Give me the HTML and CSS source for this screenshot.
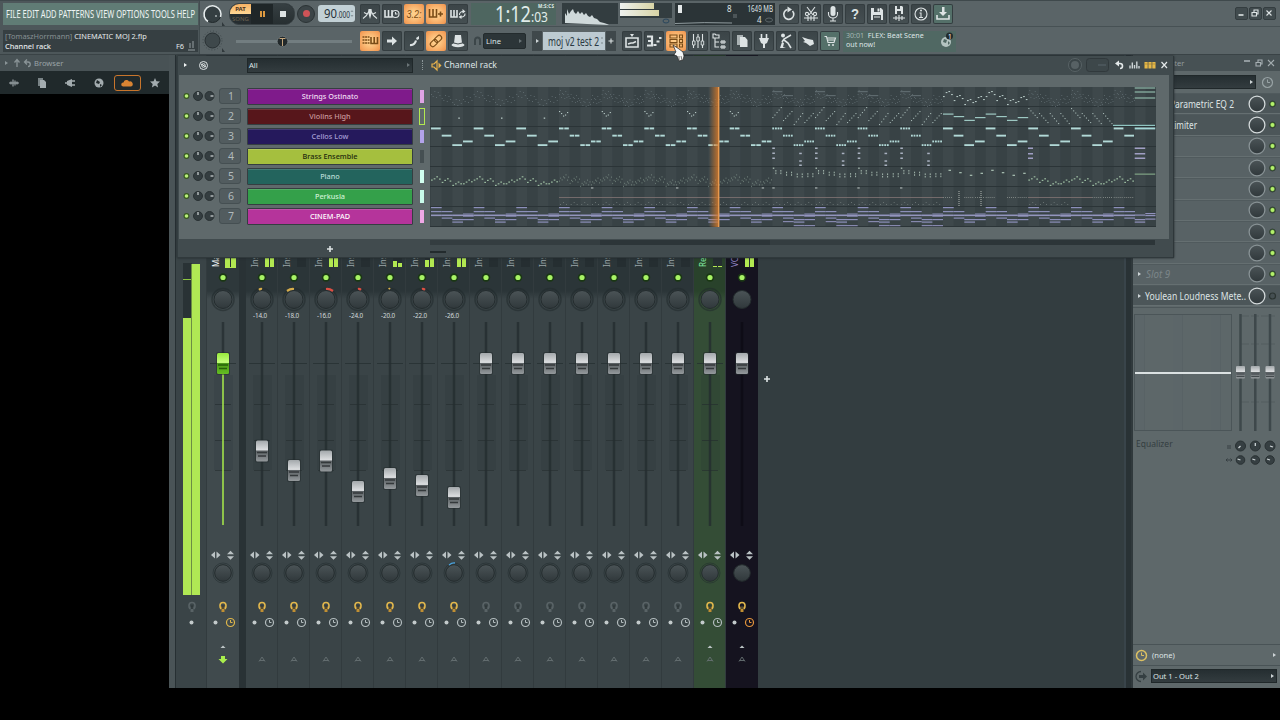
FILE: index.html
```html
<!DOCTYPE html>
<html lang="en">
<head>
<meta charset="UTF-8">
<meta name="viewport" content="width=device-width, initial-scale=1.0">
<title>CINEMATIC MOJ 2.flp</title>
<link rel="stylesheet" href="styles.css">
</head>
<body>

<header class="toolbar">
  <div class="tb-left">
    <div class="menu"><svg width="194" height="22"><text x="3" y="15" textLength="189" lengthAdjust="spacingAndGlyphs">FILE EDIT ADD PATTERNS VIEW OPTIONS TOOLS HELP</text></svg></div>
    <div class="hint">
      <div><span>[TomaszHorrmann]</span> CINEMATIC MOJ 2.flp</div>
      <div class="hint-row"><b>Channel rack</b><i>F6 <svg width="9" height="10" viewBox="0 0 9 10"><path d="M1 8h7v2H1zM2 2h2v5H2zM5 0h2v7H5z" fill="#666f72"/></svg></i></div>
    </div>
  </div>

  <div class="tb-main">
    <div class="tb-row">
      <svg class="vol" width="26" height="26" viewBox="0 0 26 26"><circle cx="12.500" cy="13" r="8.500" fill="#343e41" stroke="#20282a"/><path d="M8 20.500A8.500 8.500 0 1 1 20.500 16" fill="none" stroke="#e6eced" stroke-width="1.600"/><circle cx="16" cy="15" r="1" fill="#aab3b5"/><path d="M22 25v-4l3 4z" fill="#30393c"/></svg>
      <div class="transport">
        <div class="patsong"><span class="pat">PAT</span><span class="song">SONG</span></div>
        <div class="pause"><i></i><i></i></div>
        <div class="stop"><i></i></div>
      </div>
      <div class="rec"><i></i></div>
      <div class="tempo"><svg width="37" height="17"><text x="6" y="13" font-size="13" textLength="13" lengthAdjust="spacingAndGlyphs">90</text><text x="19" y="13" font-size="8.500" textLength="13" lengthAdjust="spacingAndGlyphs">.000</text><path d="M32.500 7l1.500-2 1.500 2zM32.500 10l1.500 2 1.500-2z" fill="#8a989d"/></svg></div>
      <div class="btns g1">
        <button><svg viewBox="0 0 20 20"><path d="M3 14.500Q7 12 8.500 8M17 14.500Q13 12 11.500 8M4 8.500l3 1.500M16 8.500l-3 1.500" class="s"/><path d="M8.500 5h3l.500 3-2 7-2-7z" class="f"/></svg></button>
        <button><svg viewBox="0 0 20 20"><path d="M3 6v7h7V6M6.500 6v7" class="s b"/><circle cx="13.500" cy="10" r="3.500" class="s"/><path d="M13.500 8v2h2" class="s"/></svg></button>
        <button class="on"><svg viewBox="0 0 20 20"><text x="2.500" y="14" font-size="11" font-style="italic" textLength="15" lengthAdjust="spacingAndGlyphs" class="t">3.2:</text></svg></button>
        <button class="on"><svg viewBox="0 0 20 20"><path d="M3.500 5v8h7V5M7 5v8M12 10h5M14.500 7.500v5" class="s b"/></svg></button>
        <button><svg viewBox="0 0 20 20"><path d="M3 6v7h6V6M6 6v7" class="s b"/><path d="M11.500 11a3 3 0 0 1 4.500-3M17 9.500a3 3 0 0 1-4.500 3" class="s"/><path d="M14.500 5l3 2.500-3 2zM13.500 11v4l-3-2z" class="f"/></svg></button>
      </div>
      <div class="clock"><svg width="84" height="22"><g fill="#e0ecea"><text x="24" y="18.500" font-size="21" textLength="36" lengthAdjust="spacingAndGlyphs">1:12</text><text x="60" y="18.500" font-size="15" textLength="17" lengthAdjust="spacingAndGlyphs">:03</text><text x="67" y="5" font-size="4.500" font-weight="bold" textLength="16">M:S:CS</text></g></svg></div>
      <div class="scope"><svg width="56" height="21"><path d="M3 20V10l2 3V6l2 5 2-3 2-2 1 3 2 2 2-3 2 3 2-2 2 3 2-2 2 3 2 1 2-2 2 3 3 1 3 3 4 1 3 1 2 1z" fill="#cfd9da"/></svg></div>
      <div class="peaks"><i></i><i></i><svg width="8" height="6"><ellipse cx="4" cy="3" rx="3" ry="2" fill="none" stroke="#29465c"/></svg></div>
      <div class="cpu"><svg width="100" height="23"><path d="M3 2h4v8H3z" fill="#e5e9ea"/><path d="M58 11h4v4h-4z" fill="#4c5558"/><path d="M0 20.500q30-1.500 57-.500" stroke="#909b9e" fill="none"/><g fill="#dfe5e6" font-size="8"><text x="52" y="8.500" textLength="4">8</text><text x="72.500" y="8.500" textLength="25.500" lengthAdjust="spacingAndGlyphs">1649 MB</text><text x="82" y="19.500" textLength="4.500">4</text></g><ellipse cx="94" cy="17" rx="3.500" ry="2" fill="none" stroke="#5b6568"/></svg></div>
      <div class="btns g2">
        <button><svg viewBox="0 0 20 20"><path d="M13.500 7a5 5 0 1 1-5-1.500" class="s b"/><path d="M8.500 2.500l4.500 3-4.500 3z" class="f"/></svg></button>
        <button><svg viewBox="0 0 20 20"><path d="M6 3l6 8M14 3l-6 8M3 14h14M7 12v5M10 11.500v5M13 12v5" class="s"/><circle cx="6" cy="10" r="1.600" class="s"/><circle cx="14" cy="10" r="1.600" class="s"/></svg></button>
        <button><svg viewBox="0 0 20 20"><rect x="7.500" y="2" width="5" height="10" rx="2.500" class="f"/><path d="M5.500 8v2a4.500 4 0 0 0 9 0V8M10 14v3M7 17h6" class="s"/></svg></button>
        <button><svg viewBox="0 0 20 20"><text x="6" y="15" font-size="14" font-weight="bold" textLength="8" lengthAdjust="spacingAndGlyphs" class="t">?</text></svg></button>
        <button><svg viewBox="0 0 20 20"><path d="M4 4h10l2 2v10H4z" class="f"/><path d="M7 4h6v4H7zM6 11h8v5H6z" fill="#414a4d"/><path d="M10.500 4.500h2v3h-2zM7 12.500h6v1H7z" class="f"/></svg></button>
        <button><svg viewBox="0 0 20 20"><path d="M6 2h7l1 1v7H6z" class="f"/><path d="M8 2h3v3H8zM8 7h4v3H8z" fill="#414a4d"/><path d="M4 14h12M7 12v4M10 11v6M13 12v4" class="s"/></svg></button>
        <button><svg viewBox="0 0 20 20"><circle cx="10" cy="10" r="6" class="s"/><path d="M8.500 9H10v4.500M8 13.500h4" class="s"/><circle cx="10" cy="6.500" r="1" class="f"/></svg></button>
        <button class="green"><svg viewBox="0 0 20 20"><path d="M9 3h2.500v5H14l-4 4-4-4h3z" class="f"/><path d="M4 11v4h12v-4" class="s b"/></svg></button>
      </div>
      <div class="winbtns big">
        <span><svg viewBox="0 0 10 10"><path d="M2.500 7h5" class="s b"/></svg></span>
        <span><svg viewBox="0 0 10 10"><path d="M2 4.500h4.500v3.500H2zM4 4V2h4v4H7" class="s"/></svg></span>
        <span><svg viewBox="0 0 10 10"><path d="M2.500 2.500l5 5M7.500 2.500l-5 5" class="s"/></svg></span>
      </div>
    </div>

    <div class="tb-row">
      <svg class="vol" width="26" height="26" viewBox="0 0 26 26"><circle cx="12.500" cy="12.500" r="9.500" fill="none" stroke="#3f494c" stroke-dasharray="1 2"/><circle cx="12.500" cy="12.500" r="7.500" fill="#3e484b" stroke="#283033"/><path d="M22 24v-4l3 4z" fill="#30393c"/></svg>
      <div class="pitch"><svg width="125" height="24"><path d="M7 12.500h116" stroke="#727d80" stroke-width="3"/><circle cx="53.500" cy="12.500" r="5.300" fill="#22292b" stroke="#7a8486" stroke-width=".700"/><path d="M50.500 9.500h6M53.500 9v8" stroke="#c3a57c"/></svg></div>
      <div class="btns g3">
        <button class="on"><svg viewBox="0 0 20 20"><path d="M2.500 6h7M2.500 9h7M2.500 12h7" class="s b" stroke-dasharray="2 .6"/><path d="M11 6v6.500h6.500V6M14.200 6v6.500" class="s b"/></svg></button>
        <button><svg viewBox="0 0 20 20"><path d="M5 10h6" class="s b3"/><path d="M10 5.500l5 4.500-5 4.500z" class="f"/></svg></button>
        <button><svg viewBox="0 0 20 20"><path d="M6 14q4.500.500 6-4.500" class="s b2"/><path d="M12 7l3-2v3l-2 1z" class="f"/></svg></button>
        <button class="on"><svg viewBox="0 0 20 20"><g transform="rotate(-45 10 10)"><rect x="3" y="7.500" width="8" height="5" rx="2.500" class="s"/><rect x="9" y="7.500" width="8" height="5" rx="2.500" class="s"/></g></svg></button>
        <button><svg viewBox="0 0 20 20"><path d="M7 4h6l1 8H6z" class="f"/><ellipse cx="10" cy="14" rx="6.500" ry="2.200" class="f"/><path d="M6 12q4 2 8 0" stroke="#414a4d" fill="none"/></svg></button>
      </div>
      <svg class="magnet" width="9" height="10" viewBox="0 0 9 10"><path d="M2 9V4a2.500 2.500 0 0 1 5 0v5" fill="none" stroke="#3c4649" stroke-width="2"/></svg>
      <div class="snap"><span>Line</span><em></em></div>
      <div class="pattern"><span class="pbtn"><em></em></span><div><svg width="62" height="18"><text x="5" y="13.500" font-size="12" textLength="51" lengthAdjust="spacingAndGlyphs">moj v2 test 2</text><path d="M59 5v2M59 10v2" stroke="#7c898d"/></svg></div><span class="pbtn"><svg width="8" height="8" viewBox="0 0 8 8"><path d="M4 1.500v5M1.500 4h5" class="s"/></svg></span></div>
      <div class="btns g4">
        <button><svg viewBox="0 0 20 20"><path d="M4 7h12v9H4zM6 13l3-1h2l3-1.500" class="s b"/><path d="M8 3h4l-2 3z" class="f"/></svg></button>
        <button><svg viewBox="0 0 20 20"><path d="M3 5.500h5M4 10h4M3 14.500h5M8 4.500v11M9.500 14h3M12.500 10.500h3M15 7h2.500" class="s b2"/></svg></button>
        <button class="on"><svg viewBox="0 0 20 20"><path d="M4 4h7v3H4zM4 8.500h7v3H4zM4 13h7v3H4zM13.500 4h3v3h-3zM13.500 8.500h3v3h-3zM13.500 13h3v3h-3z" class="s"/></svg></button>
        <button><svg viewBox="0 0 20 20"><path d="M5.500 3v14M10 3v14M14.500 3v14" class="s"/><path d="M4.500 10h2.500v4H4.500zM8.800 6h2.500v4H8.800zM13.200 10h2.500v4h-2.500z" fill="#414a4d" stroke="#dde3e4" stroke-width=".900"/></svg></button>
        <button><svg viewBox="0 0 20 20"><path d="M3 3h2l1 1h3v3H3zM5 7v9h4M5 11h4M10 11h6M10 16h6M12 9v4M14 9v4M12 14v4M14 14v4" class="s"/></svg></button>
        <button><svg viewBox="0 0 20 20"><path d="M5 4h6v10H5z" fill="#aab2b4"/><path d="M8 6h5l2.500 3v7H8z" class="f"/></svg></button>
        <button><svg viewBox="0 0 20 20"><path d="M7.500 3v4M12.500 3v4" class="s b"/><path d="M5 7h10l-2 5-2 1v4H9v-4l-2-1z" class="f"/></svg></button>
        <button><svg viewBox="0 0 20 20"><circle cx="7" cy="4.500" r="2" class="f"/><path d="M15 4L8 8l-2 3M8 9l4 3 3 5" class="s b"/><path d="M4 17l2-6 2 1-1 4 3 1z" class="f"/></svg></button>
        <button><svg viewBox="0 0 20 20"><path d="M4 6l6 2 5 1 1 4-4 2-4-3-3-1 2-1z" class="f"/></svg></button>
        <button class="green"><svg viewBox="0 0 20 20"><path d="M4.500 5.500h2l1.500 6h6l1.500-4.500H7M8 9h7" class="s"/><circle cx="9" cy="14" r="1" class="f"/><circle cx="13" cy="14" r="1" class="f"/></svg></button>
      </div>
      <div class="news"><div><span>30:01</span>&nbsp; FLEX: Beat Scene<br>out now!</div>
        <svg width="16" height="18" viewBox="0 0 16 18"><circle cx="7" cy="11" r="5" fill="#b4c4c1"/><path d="M5 8l3 1-1 3-3-1zM9 10l2 2-2 2z" fill="#506863"/><circle cx="10.500" cy="5" r="3.500" fill="#222b2c"/><text x="9" y="7.500" font-size="6.500" fill="#fff">1</text></svg>
      </div>
    </div>
  </div>
</header>

<main class="desk">
  <aside class="browser">
    <div class="browser-head"><em></em>
      <svg width="8" height="10" viewBox="0 0 8 10"><path d="M4 9V2M1.500 4.500L4 1.500l2.500 3" fill="none" stroke="#8a9497" stroke-width="1.300"/></svg>
      <svg width="8" height="10" viewBox="0 0 8 10"><path d="M2 4h3a2 2 0 0 1 0 4.500M4 1.500L1.500 4 4 6.500" fill="none" stroke="#8a9497" stroke-width="1.300"/></svg>
      <span>Browser</span></div>
    <div class="tabs">
      <span><svg viewBox="0 0 12 12"><path d="M1 6h10M3 4.500v3M5 2.500v7M7 3.500v5M9 4.500v3" class="s"/></svg></span>
      <span><svg viewBox="0 0 12 12"><path d="M2 1h5v8H2z" fill="#798386"/><path d="M4 3h4l2 2v6H4z" class="f"/></svg></span>
      <span><svg viewBox="0 0 12 12"><path d="M1 6h4M8 4h3M8 8h3" class="s b"/><path d="M3 4l5-2v8L3 8z" class="f"/></svg></span>
      <span><svg viewBox="0 0 12 12"><circle cx="6" cy="6" r="4.500" class="f"/><path d="M4 3l3 2-1 2-3-1zM7 7l2 1-2 2z" fill="#20292b"/></svg></span>
      <span class="sel"><svg viewBox="0 0 12 12"><path d="M2 9.500a2 2 0 0 1 .500-4 3 3 0 0 1 5.500-1 2.600 2.600 0 0 1 2 5z" fill="#d98433"/></svg></span>
      <span><svg viewBox="0 0 12 12"><path d="M6 1l1.400 3.300 3.600.300-2.700 2.400.800 3.500L6 8.600 2.900 10.500l.800-3.500L1 4.600l3.600-.300z" class="f"/></svg></span>
    </div>
  </aside>

  <section class="mixer">
    <div class="strips" id="strips"></div>
    <div class="mixer-empty"><svg width="8" height="8" viewBox="0 0 8 8"><path d="M4 1v6M1 4h6" class="s b"/></svg></div>
    <div class="mixer-split"></div>
    <div class="fx">
      <div class="fx-head"><span>Mixer - Master</span>
        <div class="winbtns">
          <span><svg viewBox="0 0 10 10"><path d="M2 3h6" class="s b"/></svg></span>
          <span><svg viewBox="0 0 10 10"><path d="M2 4.500h4.500V8H2zM4 4V2h4v4H7" class="s"/></svg></span>
          <span><svg viewBox="0 0 10 10"><path d="M2 2l6 6M8 2L2 8" class="s"/></svg></span>
        </div>
      </div>
      <div class="fx-preset"><div class="drop"><i></i><em></em></div><svg width="13" height="13" viewBox="0 0 13 13"><circle cx="6.500" cy="6.500" r="5" fill="none" stroke="#98a3a5" stroke-width="1.200"/><path d="M6.500 3.500v3H9" fill="none" stroke="#98a3a5"/></svg></div>
      <div class="slots" id="slots"></div>
      <div class="eq">
        <div class="eq-graph"><i></i></div>
        <svg width="46" height="118" viewBox="0 0 46 118"><path d="M8 2h34M8 30h34M8 88h34" stroke="#525c5f" stroke-dasharray="8 2"/><path d="M7.500 0v117M22.300 0v117M37 0v117" stroke="#3e484b" stroke-width="2.500"/><g id="eqCaps"></g></svg>
      </div>
      <div class="eq-foot"><span>Equalizer</span><svg width="56" height="32" id="eqKnobs"></svg></div>
      <div class="fx-gap"></div>
      <div class="fx-line"><svg width="13" height="13" viewBox="0 0 13 13"><circle cx="6.500" cy="6.500" r="5" fill="none" stroke="#dcc062" stroke-width="1.500"/><path d="M6.500 3.500v3H9" fill="none" stroke="#dcc062"/></svg><span>(none)</span><em></em></div>
      <div class="fx-line out"><svg width="13" height="13" viewBox="0 0 13 13"><path d="M6 1.500a5 5 0 1 0 0 10" fill="none" stroke="#353f42" stroke-width="1.300"/><path d="M4 5h4V2.500l4 4-4 4V8H4z" fill="#353f42"/></svg><div class="drop"><span>Out 1 - Out 2</span><em></em></div></div>
    </div>
  </section>

  <section class="rack">
    <div class="rack-head">
      <em></em>
      <svg class="gear" width="11" height="11" viewBox="0 0 11 11"><circle cx="5.500" cy="5.500" r="4" fill="none" stroke="#dfe5e6"/><circle cx="5.500" cy="5.500" r="1.800" fill="none" stroke="#dfe5e6"/><path d="M3 4l5 3" stroke="#dfe5e6"/></svg>
      <div class="drop group"><span>All</span><em></em></div>
      <i class="grip"></i>
      <svg class="spk" width="11" height="11" viewBox="0 0 11 11"><path d="M1 4h2l3-3v9L3 7H1z" fill="none" stroke="#e8b24c" stroke-width="1.200"/><path d="M7.500 2.500v6l3-3z" fill="#e8b24c"/></svg>
      <span class="title">Channel rack</span>
      <div class="rack-tools">
        <svg width="44" height="16" viewBox="0 0 44 16"><circle cx="8" cy="8" r="6.500" fill="#3b4548" stroke="#586265"/><circle cx="8" cy="8" r="4" fill="#576164"/><rect x="19.500" y="1.500" width="22" height="13" rx="3" fill="#3d474a" stroke="#31393c"/><path d="M31 8h8" stroke="#59646a"/></svg>
        <svg width="10" height="12" viewBox="0 0 10 12"><path d="M2 4.500h3a2.300 2.300 0 0 1 0 5" fill="none" stroke="#e3e8e9" stroke-width="1.600"/><path d="M0 4.500L4 1.500v6z" fill="#e3e8e9"/></svg>
        <svg width="11" height="12" viewBox="0 0 11 12"><path d="M1 9.500v-3M3.300 9.500v-6M5.500 9.500V6M7.800 9.500v-7M10 9.500V7" stroke="#cdd4d6" stroke-width="1.400"/></svg>
        <svg width="12" height="12" viewBox="0 0 12 12"><path d="M.500 3h3.200v6.500H.500zM4.400 3h3.200v6.500H4.400zM8.300 3h3.200v6.500H8.300z" fill="#e6b848"/><path d="M1 5h10" stroke="#9b7b30" stroke-width=".600"/></svg>
        <svg width="9" height="12" viewBox="0 0 9 12"><path d="M1.500 3l5.500 6M7 3L1.500 9" stroke="#e3e8e9" stroke-width="1.200"/></svg>
      </div>
    </div>
    <div class="rack-body">
      <div class="channels" id="channels"></div>
      <svg class="clips" id="clips" width="726" height="140" viewBox="430 87 726 140"></svg>
    </div>
    <div class="rack-foot"><svg class="add" width="8" height="8" viewBox="0 0 8 8"><path d="M4 1v6M1 4h6" class="s b"/></svg><div class="scroll"><i></i></div></div>
  </section>

  <svg class="cursor" width="14" height="18" viewBox="0 0 14 18"><path d="M1 1l6 4 4 3 1 4-1 4-4 1-2-5-3-1 1-2 1-1z" fill="#f4f6f6" stroke="#222" stroke-width=".700"/><path d="M7 12v4M9 12l1 4" stroke="#555" stroke-width=".800"/></svg>
</main>

<script src="script.js"></script>
</body>
</html>
```

FILE: styles.css
```css
* {margin: 0; padding: 0; box-sizing: border-box;}
body {
  width: 1280px; height: 720px; overflow: hidden; background: #000; color: #dfe5e6;
  font-family: "Noto Sans", "Open Sans", sans-serif; font-size: 7.6px;
}
svg {display: block; flex: none; overflow: visible;}
i, em {font-style: normal;}
.s {fill: none; stroke: #dde3e4; stroke-width: 1.1;}
.b {stroke-width: 1.6;}
.b2 {stroke-width: 2.2;}
.b3 {stroke-width: 3;}
.f, .t {fill: #dde3e4;}
/* small right arrow used by every drop-down */
em {width: 0; height: 0; border: 2.5px solid transparent; border-left: 3px solid #cdd4d6; border-right: 0; flex: none;}

/* toolbar */
.toolbar {display: flex; height: 55px; background: #5a6467; border-bottom: 1px solid #3a4346; border-top: 1px solid #3f494c;}
.tb-left {width: 200px; padding: 2px 0 0 3px; background: #4d575a; border-right: 1px solid #424c4f;}
.menu {width: 195px; height: 22px; background: #607c75;}
.menu text {font-size: 11.5px; fill: #eef4f3;}
.hint {width: 195px; height: 22px; margin-top: 5px; padding: 1px 2px; background: #363f42; font-size: 7.4px; line-height: 10px; color: #e4e9ea; white-space: nowrap;}
.hint span {color: #879194;}
.hint b {font-weight: 500;}
.hint-row {display: flex; justify-content: space-between;}
.hint-row i {display: flex; gap: 3px;}
.tb-main {flex: 1;}
.tb-row {display: flex; align-items: center; height: 26px; border-bottom: 1px solid #475154;}
.tb-row + .tb-row {height: 28px; border: 0;}
.vol {margin-right: 3px;}
.transport {display: flex; width: 66px; height: 22px; border-radius: 10px; overflow: hidden; background: #262d30; border: 1px solid #394245;}
.patsong {width: 21px; text-align: center; font-size: 6px; line-height: 10px;}
.patsong span {display: block; height: 10px;}
.pat {background: linear-gradient(#f6b264, #ffd795); color: #4b321a; font-weight: bold;}
.song {color: #6b6250;}
.pause {display: flex; gap: 1px; width: 22px; align-items: center; justify-content: center; background: #1f2628;}
.pause i {width: 2px; height: 6px; background: #dc9940;}
.stop {display: flex; flex: 1; align-items: center; justify-content: center; background: linear-gradient(#363f42, #272f31);}
.stop i {width: 6px; height: 6px; margin-right: 2px; background: #dce2e3;}
.rec {display: flex; width: 18px; height: 18px; margin-left: 2px; border-radius: 50%; background: #3c4548; border: 1px solid #2b3335; align-items: center; justify-content: center;}
.rec i {width: 7px; height: 7px; border-radius: 50%; background: #cf5357;}
.tempo {width: 37px; height: 17px; margin-left: 3px; background: #c2d0d5; border-radius: 3px;}
.tempo text {fill: #26323a;}
.btns {display: flex; gap: 2px;}
button {width: 20px; height: 20px; border: 0; border-radius: 2px; background: linear-gradient(#3b4447, #454f52); box-shadow: inset 0 0 0 1px #343d40;}
button svg {width: 20px; height: 20px;}
.on {background: radial-gradient(#ffce8a 20%, #f0914a); box-shadow: none;}
.on .s {stroke: #7a4c17;}
.on .t {fill: #7a4c17;}
.green {background: #547069;}
.g1 {margin-left: 5px;}
.clock {width: 85px; height: 22px; margin-left: 3px; background: #4e6660;}
.scope {width: 56px; height: 21px; margin-left: 6px; background: #333d40;}
.peaks {display: flex; flex-direction: column; gap: 1px; width: 52px; height: 21px; margin-left: 2px; background: linear-gradient(#333d40 15px, transparent 15px);}
.peaks i {width: 34px; height: 6px; background: linear-gradient(90deg, #eef1ee, #d8d4a5);}
.peaks i + i {width: 39px;}
.peaks svg {margin: 1px 0 0 42px;}
.cpu {width: 100px; height: 22px; margin-left: 3px; background: #2b3437;}
.g2 {margin-left: 4px;}
.winbtns {display: flex; gap: 2px; margin-left: auto;}
.winbtns svg {width: 10px; height: 10px;}
.big {margin-right: 4px; gap: 1px;}
.big span {width: 13px; height: 13px; background: #414b4e; border: 1px solid #343d40; border-radius: 2px;}
.pitch {width: 125px;}
.g3 {margin-left: 6px;}
.magnet {margin-left: 5px;}
.snap {display: flex; align-items: center; justify-content: space-between; width: 43px; height: 16px; margin-left: 1px; padding: 0 3px 0 2px; background: #2c3538; border: 1px solid #232b2d; border-radius: 2px;}
.snap em {border-left-color: #687275;}
.pattern {display: flex; align-items: center; margin-left: 6px; gap: 1px;}
.pattern div {background: #bccad1; height: 18px;}
.pattern text {fill: #2a3943;}
.pbtn {display: flex; width: 10px; height: 20px; background: #3f484b; align-items: center; justify-content: center;}
.g4 {margin-left: 6px;}
.news {display: flex; justify-content: space-between; width: 113px; height: 21px; margin-left: 3px; padding: 0 1px 0 3px; background: #506863; line-height: 9.8px; font-size: 7.1px; white-space: nowrap;}
.news span {color: #a5b7b4;}

/* desktop area */
.desk {position: relative; height: 633px;}
.browser {position: absolute; left: 0; top: 0; width: 169px;}
.browser-head {display: flex; align-items: center; gap: 2px; height: 16px; padding-left: 5px; background: #485255; color: #9aa4a7;}
.browser-head em {border-left-color: #8a9497; margin-right: 3px;}
.browser-head span {margin-left: 1px;}
.tabs {display: flex; height: 23px; background: #20292b; align-items: center; justify-content: space-between;}
.tabs span {display: flex; width: 27px; height: 16px; align-items: center; justify-content: center;}
.tabs svg {width: 12px; height: 12px;}
.tabs .f {fill: #a3acaf;}
.tabs .s {stroke: #a3acaf;}
.tabs .sel {border: 1px solid #c8752c; border-radius: 3px;}

/* mixer window */
.mixer {position: absolute; left: 169px; top: 0; width: 1111px; height: 633px; display: flex; background: #333d40; border-left: 6px solid #4a5457;}
.strips {display: flex; border-left: 1px solid #273033;}
.strip {width: 32px; height: 633px; padding-top: 197px; border-right: 1px solid #323b3e; background: linear-gradient(#2b3538 236px, #3a4447 244px);}
.master {background: linear-gradient(#2e383b 236px, #404a4d 244px); margin-right: 7px; box-shadow: 7px 0 #293235; border: 0;}
.rec-send {background: linear-gradient(#29422b 236px, #344d36 244px);}
.vo {background: #15131f; border-color: #15131f;}
.meters {padding-top: 208px; background: #3a4447; width: 31px;}
.head {display: flex; height: 17px; overflow: hidden;}
.name {width: 11px; margin-left: 4px; writing-mode: vertical-rl; transform: rotate(180deg); font-size: 8px; line-height: 10px; color: #99a4a7; white-space: nowrap; height: 15px; overflow: hidden;}
.master .name {color: #f2f5f5;}
.rec-send .name {color: #80eaa0;}
.vo .name {color: #9587c8;}
.bars {display: flex; align-items: flex-end; gap: 1px; width: 9px; height: 9px; margin: 6px 0 0 4px; background: #252e31;}
.bars i {flex: 1; background: #b2e851;}
.master .bars {outline: 1px solid #b2e851;}
.db {height: 7px; font-size: 6.3px; line-height: 6px; color: #d3dadc; text-align: center; width: 28px; letter-spacing: -.1px;}
.mixer-empty {flex: 1; padding: 320px 0 0 5px;}
.mixer-split {width: 9px; background: #293235; border-left: 2px solid #39444a; border-right: 2px solid #30393c;}

/* fx panel */
.fx {display: flex; flex-direction: column; width: 147px; background: #5e686a;}
.fx-head {display: flex; align-items: center; height: 16px; background: #475154; color: #929c9f; padding-right: 4px;}
.fx-head > span {width: 49px; text-align: right; white-space: nowrap;}
.fx-head .s {stroke: #a5aeb1;}
.fx-preset {display: flex; gap: 5px; height: 21px; padding: 3px 6px 2px 2px; align-items: center;}
.drop {display: flex; flex: 1; align-items: center; justify-content: space-between; height: 14px; padding: 0 2px 0 1px; background: linear-gradient(#252e31, #333c3f); border: 1px solid #20282a;}
.slots {height: 216px; padding-top: 1px; border-bottom: 1px solid #4d575a;}
.slot {display: flex; align-items: center; height: 21.33px; padding-left: 5px; border-top: 1px solid #505a5d; border-bottom: 1px solid #656f71; font-size: 11px; background: #586265;}
.slot text {fill: #dde3e4;}
.slot .off {fill: #7c8689; font-style: italic;}
.slot.used {background: #4c5659;}
.eq {display: flex; gap: 1px; padding: 6px 0 0 1px;}
.eq-graph {display: flex; width: 98px; height: 117px; align-items: center; border: 1px solid #4b5558; background: repeating-linear-gradient(90deg, #5c6669 0 9px, #586265 9px 10px, #5d6769 10px 38px);}
.eq-graph i {width: 100%; height: 2px; background: #dbe1e2;}
.eq-foot {display: flex; justify-content: space-between; height: 34px; padding: 6px 3px 0 3px; font-size: 8.5px; color: #343e41;}
.fx-gap {flex: 1;}
.fx-line {display: flex; align-items: center; height: 21px; padding: 0 4px 0 2px; gap: 4px; border-top: 1px solid #495356;}
.fx-line > em {margin-left: auto;}
.out {height: 23px; padding: 0 3px 2px 2px; gap: 3px;}

/* channel rack window */
.rack {position: absolute; left: 177px; top: 1px; width: 997px; height: 202px; background: #414b4e; border-left: 1px solid #333d40; border-right: 1px solid #2e373a; border-bottom: 1px solid #30393c; box-shadow: 0 0 2px #20282a;}
.rack-head {display: flex; align-items: center; height: 18px;}
.rack-head > em {margin-left: 6px; border-left-color: #f0f3f3;}
.gear {margin-left: 11px;}
.group {flex: none; width: 166px; height: 15px; margin-left: 38px;}
.group em {border-left-color: #6b7578;}
.grip {width: 1px; height: 10px; margin: 0 8px 0 9px; border-left: 1px dotted #8d979a;}
.title {margin-left: 2px; font-size: 8.7px;}
.rack-tools {display: flex; gap: 4px; margin-left: auto; align-items: center; padding-right: 4px;}
.rack-body {display: flex; height: 164px; margin: 1px 4px 0 1px; padding-top: 12px; background: #5f696b;}
.channels {width: 251px; margin-top: -1px;}
.ch {display: flex; align-items: center; height: 20px;}
.num {width: 22px; height: 16px; margin-left: 1px; padding-right: 6px; text-align: right; font-size: 10.5px; line-height: 15px; border: 1px solid #454f52; border-radius: 3px; background: #525c5f; color: #b1babc;}
.chname {width: 166px; height: 17px; margin-left: 6px; line-height: 14px; text-align: center; font-size: 7.3px; font-weight: 500; border: 1px solid #353e41; border-radius: 1px; color: #d9dfe0; box-shadow: inset 0 1px rgba(255,255,255,.15);}
.chsel {width: 4px; height: 13px; margin-left: 7px;}
.clips {background: #384245; overflow: hidden;}
.rack-foot {display: flex; height: 18px;}
.add {margin: 6px 0 0 148px;}
.scroll {width: 725px; height: 5px; margin: 1px 0 0 96px; background: linear-gradient(90deg, #343d40 170px, #2c3538 170px 340px, #343d40 340px 520px, #2c3538 520px);}
.scroll i {display: block; width: 16px; height: 2px; margin-top: 11px; background: #232b2d;}
.cursor {position: absolute; left: 672px; top: -11px;}
```

FILE: script.js
```js
const $ = id => document.getElementById(id);

/* ---------- channel rack ---------- */
const channels = [
  ['Strings Ostinato', '#7f1b8b', '#f0dff2', '#dfa4e4'],
  ['Violins High', '#57161b', '#c99a9e', ''],
  ['Cellos Low', '#25195c', '#a79fd6', '#b3a3ea'],
  ['Brass Ensemble', '#a5bf3e', '#20270c', '#454f52'],
  ['Piano', '#23645d', '#b9dcd6', '#d2fff0'],
  ['Perkusia', '#34a04a', '#d0f2d6', '#c8fbea'],
  ['CINEM-PAD', '#b5349b', '#ffffff', '#f0a8e6']
];
$('channels').innerHTML = channels.map((c, i) => `
  <div class="ch">
    <svg width="39" height="18" viewBox="-1 0 39 18">
      <circle cx="6.500" cy="9" r="3" fill="#3a5a24"/><circle cx="6.500" cy="9" r="1.800" fill="#b9f07a"/>
      <circle cx="18" cy="9" r="4.500" fill="#343d40" stroke="#293133"/><path d="M18 5v3" stroke="#c6cdce" stroke-width="1.300"/>
      <circle cx="29.500" cy="9" r="4.500" fill="#343d40" stroke="#293133"/><path d="M30.500 9h3" stroke="#c6cdce" stroke-width="1.300"/>
    </svg>
    <div class="num">${i + 1}</div>
    <div class="chname" style="background:${c[1]};color:${c[2]}">${c[0]}</div>
    <div class="chsel" style="${c[3] ? 'background:' + c[3] : 'border:1px solid #b2e851;width:6px;height:17px;margin-left:6px'}"></div>
  </div>`).join('');

/* note preview: 17 groups of 4 bars */
const BAR = 32 / 3, X0 = 431;
let out = '';
const box = (x, y, w, h, c) => out += `<rect x="${x.toFixed(1)}" y="${y.toFixed(1)}" width="${w.toFixed(1)}" height="${h}" fill="${c}"/>`;

for (let b = 0; b < 68; b++) if (b % 2 == 0) box(X0 + b * BAR, 87, BAR, 141, '#3e484b');
for (let l = 0; l <= 7; l++) box(430, 86 + l * 20, 726, 1, '#2b3437');

const cello = [127.500, 134.700, 144.200, 140.500];
const line = [113.500, 116, 119.800, 117];
const up = [[117, 107], [120, 111], [124, 113], [122, 113]];
const down = [[108, 117], [113, 122], [113, 123], [113, 123]];
const piano = [[180, 178.700, 176.700, 179], [182.300, 180.300, 178.700, 181], [185.300, 183.700, 182, 183.700], [183.700, 182, 180, 181.700]];
const pad = [[207, 211, 214.500], [211, 214.500, 217.500], [214.500, 219, 221.500], [213.500, 215.500, 219]];
const str = [91, 95, 99, 96];

for (let b = 0; b < 68; b++) {
  const g = Math.floor(b / 4), k = b % 4, x = X0 + b * BAR, last = b >= 66;

  // strings
  if (!last) {
    if (g < 3) for (let n = 0; n < 6; n++) box(x + n * 1.700, str[k] + [3, 5, 0, 6, 1, 4][n], .900, .900, '#647075');
    else if (g == 12 || g == 13) for (let n = 0; n < 4; n++) box(x + n * 2.700, str[k] + [5, 1, 0, 3][n], 1.700, 1.100, '#b4c6c3');
    else for (let n = 0; n < 10; n++) box(x + n * 1.070, str[k] + [3, -1, 6, 2, 3, 7, 0, 6, 3, 5][n], .800, .900, '#647075');
    if (g >= 8 && g < 12 && k < 2) box(x, k ? 95 : 91, 10, 1.200, '#5e6a6e');
  }

  // violins
  if (g < 3 && k == 2) box(x + 6, 117.500, 1.500, 1.300, '#b4c6c3');
  if (g >= 3 && g < 8 && k == 0) [111, 113, 115.500, 114.500, 112].forEach((y, n) => box(x + n * 2, y, 1.200, 1.100, '#b4c6c3'));
  if (g >= 8 && g < 12) for (let n = 0; n < 5; n++) box(x + n * 2.100, up[k][0] + (up[k][1] - up[k][0]) * n / 4, 1.100, 1.100, '#a2b4b1');
  if (g == 12 || g == 13) box(x, line[k], 10.500, 1.200, '#9dc8c2');
  if (g == 14 || g == 15) for (let n = 0; n < 5; n++) box(x + n * 2.100, down[k][0] + (down[k][1] - down[k][0]) * n / 4, 1.100, 1.100, '#a2b4b1');

  // cellos
  const parts = g < 3 || g >= 12 ? 1 : g < 8 ? 2 : 4;
  if (!last) for (let n = 0; n < parts; n++) box(x + n * 10.500 / parts, cello[k], 10.500 / parts - .800, 1.900, '#b2d9d7');

  // brass
  if (g >= 8 && g < 12) {
    if (k == 0) [147.500, 152.500, 157.500].forEach(y => box(x, y, 2.600, 1.500, '#a9b1c0'));
    if (k == 2) [152.700, 160.300, 164.500].forEach(y => box(x + 5.500, y, 2.600, 1.500, '#a9b1c0'));
  }

  // piano
  if (!last) {
    if (g < 3 || g >= 14) piano[k].forEach((y, n) => box(x + n * 2.660, y - .500, 1.700, 1.200, '#99b99f'));
    else if (g < 8) for (let n = 0; n < 8; n++) box(x + n * 1.330, piano[k][n >> 1] - (n % 2 ? 2.500 : -.500), .800, 1.300, '#71827b');
    else if (g < 12) {
      if (k == 0) box(x + .500, 167.500, 1.500, 1.500, '#9aaca4');
      [3, 8].forEach(d => { box(x + d, 170 + k * 1.700 - (k == 3 ? 2 : 0), 1.100, 1.600, '#9aaca4'); box(x + d, 172.500 + k * 1.700 - (k == 3 ? 2 : 0), 1.100, 1.600, '#9aaca4'); });
    } else box(x + 5.500, [169.700, 172, 174.700, 172.700][k], 2.500, 1.300, '#a2b8ac');
  }

  // percussion
  if (g >= 3 && g < 12 || g == 14) [1, 4, 7].forEach((d, n) => box(x + d, n == 1 ? 202 : 204, .900, 1, '#6c7676'));
  if (b >= 48 && b < 56 && k != 1 || b >= 62 && b < 66) for (let n = 0; n < 5; n++) box(x + n * 2, 197, .900, .900, '#8c9290');

  // pad
  if (!last) {
    pad[k].forEach(y => box(x, y, 10.700, 1.200, '#8c8fba'));
    box(x, 215, 10.700, 1.100, '#9495bd');
    if (g >= 8 && g < 12 && k) box(x, k == 1 ? 221 : 225, 10.700, 1.200, '#8688ad');
  }
}
box(559, 197, 384, .900, '#7b7070');
box(1028, 197, 64, .900, '#7b7070');
[592, 677, 762.700, 773.300, 816, 858.300, 901].forEach(x => box(x - 1, 187.300, 2.400, 1.300, '#a0a9a8'));
[958, 980].forEach(x => { for (let y = 191; y < 206; y += 2) box(x, y, 2, .900, '#7c8482'); });
box(1113, 124.800, 42, 1.200, '#8fc5c1');
[87.300, 91.300, 97.300].forEach(y => box(1134.700, y, 20.500, 1.400, '#84a89c'));
box(1134.700, 127.500, 20.500, 1.900, '#a4d6d6');
[147.500, 153, 157.500].forEach(y => { box(1028, y, 5, 1.500, '#a09fc4'); box(1134.700, y, 10.500, 1.500, '#a09fc4'); });
box(1134.700, 173.500, 20.500, 1.300, '#7a9c80');
[214.500, 219, 221.500].forEach(y => box(1134.700, y, 10.500, 1.200, '#9091bb'));
[213, 215, 218.500].forEach(y => box(1145.300, y, 10.200, 1.200, '#9091bb'));

$('clips').innerHTML = out + `
  <defs><linearGradient id="ph"><stop offset="0" stop-color="#d87a28" stop-opacity="0"/><stop offset="1" stop-color="#d87a28" stop-opacity=".8"/></linearGradient></defs>
  <rect x="709" y="87" width="9" height="140" fill="url(#ph)"/><rect x="718" y="87" width="1.400" height="140" fill="#e79a50"/>`;

/* ---------- mixer ---------- */
const grad = `<svg width="0" height="0" style="position:absolute"><defs>
  <linearGradient id="kn" x2="0" y2="1"><stop stop-color="#4b5457"/><stop offset="1" stop-color="#30383b"/></linearGradient>
  <linearGradient id="cap" x2="0" y2="1"><stop stop-color="#a3a8ab"/><stop offset=".45" stop-color="#dcdee0"/><stop offset=".5" stop-color="#5c6265"/><stop offset="1" stop-color="#94999c"/></linearGradient>
  <linearGradient id="capg" x2="0" y2="1"><stop stop-color="#97e83c"/><stop offset=".45" stop-color="#c5ff7c"/><stop offset=".5" stop-color="#4b9a18"/><stop offset="1" stop-color="#64bd22"/></linearGradient>
</defs></svg>`;
document.body.insertAdjacentHTML('beforeend', grad);

const cap = (x, y, green) => `<rect x="${x - 7}" y="${y - 11}" width="14" height="23" rx="2" fill="#222a2c" opacity=".5"/>
  <rect x="${x - 6}" y="${y - 10}" width="12" height="21" rx="1.500" fill="url(#${green ? 'capg' : 'cap'})"/>
  <path d="M${x - 5} ${y + 2}h10M${x - 4} ${y + 5.500}h8" stroke="${green ? '#256008' : '#34393b'}" stroke-width="1.300"/>`;
const bulb = lit => `<svg width="32" height="14" viewBox="0 0 32 14"><path d="M14 9Q12.800 7 13 5.500a3 3 0 0 1 6 0Q19.200 7 18 9" fill="none" stroke="${lit ? '#e3b84d' : '#596366'}" stroke-width="1.600"/><path d="M14.500 6.500h3v5.500h-3z" fill="${lit ? '#c08f33' : '#596366'}"/><path d="M16 5.500v3.500" stroke="#262e30" stroke-width="1.400"/></svg>`;

// name, db, fader y, pan [colour, from, to], meter levels, class
const strips = [
  ['Master', '', 363, null, [9, 9], 'master'],
  ['Insert 1', '-14.0', 450.500, ['#d6ad4c', -3, 0], [9, 9], 'in'],
  ['Insert 2', '-18.0', 470, ['#d6ad4c', -7, 0], [0, 0], 'in'],
  ['Insert 3', '-16.0', 460.500, ['#dd5044', 0, 7], [9, 9], 'in'],
  ['Insert 4', '-24.0', 491, ['#dd5044', 0, 3], [0, 0], 'in'],
  ['Insert 5', '-20.0', 478, ['#d6ad4c', -1, 0], [6, 4], 'in'],
  ['Insert 6', '-22.0', 485, ['#dd5044', 0, 3], [7, 9], 'in'],
  ['Insert 7', '-26.0', 497, null, [9, 9], 'in']
];
for (let i = 8; i <= 14; i++) strips.push(['Insert ' + i, '', 363, null, [0, 0], 'empty']);
strips.push(['Reverb', '', 363, null, [1, 1], 'rec-send']);
strips.push(['VO', '', 363, null, [9, 9], 'vo']);

const stripHtml = (s, i) => {
  const [name, db, fy, pan, lv, cls] = s, vo = cls == 'vo', master = cls == 'master';
  const ring = vo ? '' : '<circle cx="16" cy="14.500" r="11" fill="none" stroke="#20292b" stroke-opacity=".55" stroke-width="1.500"/>';
  const arc = pan ? `<path d="M${16 + pan[1]} ${4 + Math.abs(pan[1]) / 3.500}Q${16 + (pan[1] + pan[2]) / 2} 3.500 ${16 + pan[2]} ${4 + Math.abs(pan[2]) / 3.500}" fill="none" stroke="${pan[0]}" stroke-width="2.200"/>` : '';
  const y = fy - 320;
  const ticks = vo ? '' : `<path d="M3 43.500h26" stroke="#242d2f" stroke-opacity=".7"/><path d="M8 84.500h16M8 120.500h16M8 150.500h16" stroke="#242d2f" stroke-opacity=".6"/><rect x="7" y="55" width="19" height="95" fill="#20292b" opacity=".13"/>`;
  const track = master ? '<path d="M16 2v38" stroke="#2b3437" stroke-width="2.500"/><path d="M16 50v155" stroke="#a3e24b" stroke-width="1.600"/>' : `<path d="M16 2v204" stroke="${vo ? '#0c0b14' : '#242d2f'}" stroke-opacity=".8" stroke-width="2.500"/>`;
  const clockCol = master ? '#dfb74b' : vo ? '#e5953c' : '#b3bcbe';
  const tri = master ? '<path d="M14 15h4v3h2.500L16 22.500l-4.500-4.500H14z" fill="#a9ee4d"/>' : '<path d="M13 20.500l3-4.500 3 4.500M13.500 19.500h5" fill="none" stroke="#667073" stroke-width=".900"/>';
  const car = i == 0 || i >= 15 ? '<path d="M13.500 7l2.500-2.500 2.500 2.500z" fill="#bdc5c7"/>' : '';
  const blue = i == 7 ? '<path d="M11 5q3-2.500 6-2" fill="none" stroke="#4ba3de" stroke-width="1.300"/>' : '';
  return `<div class="strip ${cls}">
    <div class="head"><span class="name">${name}</span><div class="bars"><i style="height:${lv[0]}px"></i><i style="height:${lv[1]}px"></i></div></div>
    <svg width="32" height="16"><circle cx="16" cy="8.500" r="4.200" fill="#1b3814"/><circle cx="16" cy="8.500" r="2.600" fill="#a8f365"/></svg>
    <svg width="32" height="28">${ring}<circle cx="16" cy="14.500" r="9" fill="url(#kn)" stroke="#242c2e"/>${arc}</svg>
    <div class="db">${db}</div>
    <svg width="32" height="230">${ticks}${track}${cap(16, y, master)}</svg>
    <svg width="32" height="10"><path d="M8 1.500v7l-4-3.500zM9.500 1.500v7l4-3.500zM20 4.300h7l-3.500-3.500zM20 6.200h7l-3.500 3.500z" fill="#bac2c4"/></svg>
    <svg width="32" height="40">${ring ? '<circle cx="16" cy="13" r="10" fill="none" stroke="#20292b" stroke-opacity=".5"/>' : ''}<circle cx="16" cy="13" r="8.300" fill="url(#kn)" stroke="#242c2e"/>${blue}</svg>
    ${bulb(cls != 'empty')}
    <svg width="32" height="17"><circle cx="8.500" cy="8.500" r="2" fill="#c3cacb"/><circle cx="23.500" cy="8.500" r="4" fill="none" stroke="${clockCol}" stroke-width="1.200"/><path d="M23.500 6v2.500h2" fill="none" stroke="${clockCol}"/></svg>
    <svg width="32" height="56"><g transform="translate(0 10)">${car}${tri}</g></svg>
  </div>`;
};

$('strips').innerHTML = `<div class="strip meters">
  <svg width="31" height="337"><rect x="7" y="0" width="9" height="332" fill="#293235"/><path d="M7 16.500h8" stroke="#8dc641"/><rect x="7" y="55" width="8" height="277" fill="#b0e854"/><rect x="15.500" y="1" width="8.500" height="331" fill="#b0e854"/></svg>
  ${bulb(false)}<svg width="32" height="17"><circle cx="15.500" cy="8.500" r="2" fill="#c3cacb"/></svg></div>` + strips.map(stripHtml).join('');

/* ---------- fx slots ---------- */
const slots = ['Parametric EQ 2', 'Limiter', '', '', '', '', '', '', 'Slot 9', 'Youlean Loudness Mete..'];
const lens = [64, 27, 0, 0, 0, 0, 0, 0, 24, 101];
const at = [32, 32, 0, 0, 0, 0, 0, 0, 8, 7];
$('slots').innerHTML = slots.map((s, i) => {
  const used = s && i != 8;
  return `<div class="slot${used ? ' used' : ''}"><em></em>
    <svg width="139" height="20">${s ? `<text x="${at[i] - 3}" y="14" class="${i == 8 ? 'off' : ''}" textLength="${lens[i]}" lengthAdjust="spacingAndGlyphs">${s}</text>` : ''}
    <circle cx="116" cy="10" r="7.900" fill="url(#kn)" stroke="${used ? '#d3d9da' : '#889295'}" stroke-width="1.300"/>
    <circle cx="131.500" cy="10" r="3" fill="${i == 9 ? '#454f52' : '#4e7b35'}" stroke="#2b3432" stroke-width="${i == 9 ? 1.200 : .800}"/>${i == 9 ? '' : '<circle cx="131.500" cy="10" r="1.900" fill="#b4f06c"/>'}</svg></div>`;
}).join('');

$('eqCaps').innerHTML = [7.500, 22.300, 37].map(x => `<rect x="${x - 4.500}" y="52" width="9" height="12.500" rx="1" fill="url(#cap)"/><path d="M${x - 4} 60h8M${x - 4} 62.500h8" stroke="#3d4447" stroke-width=".900"/>`).join('');

const ticksEq = [[-2, 2], [0, -3], [3, 1]];
$('eqKnobs').innerHTML = '<path d="M6 8h4M6 10h4" stroke="#363f42"/><path d="M5 22h6M6.500 20.500L5 22l1.500 1.500M9.500 20.500L11 22l-1.500 1.500" fill="none" stroke="#363f42"/>' +
  [19.500, 34.300, 49].map((x, i) => `<circle cx="${x}" cy="8" r="5" fill="#363f42" stroke="#293133"/><path d="M${x} 8l${ticksEq[i][0]} ${ticksEq[i][1]}" stroke="#cfd6d8" stroke-width="1.300"/>
  <circle cx="${x}" cy="22" r="4.300" fill="#363f42" stroke="#293133"/><path d="M${x} 22l-3-1" stroke="#cfd6d8" stroke-width="1.200"/>`).join('');
```
